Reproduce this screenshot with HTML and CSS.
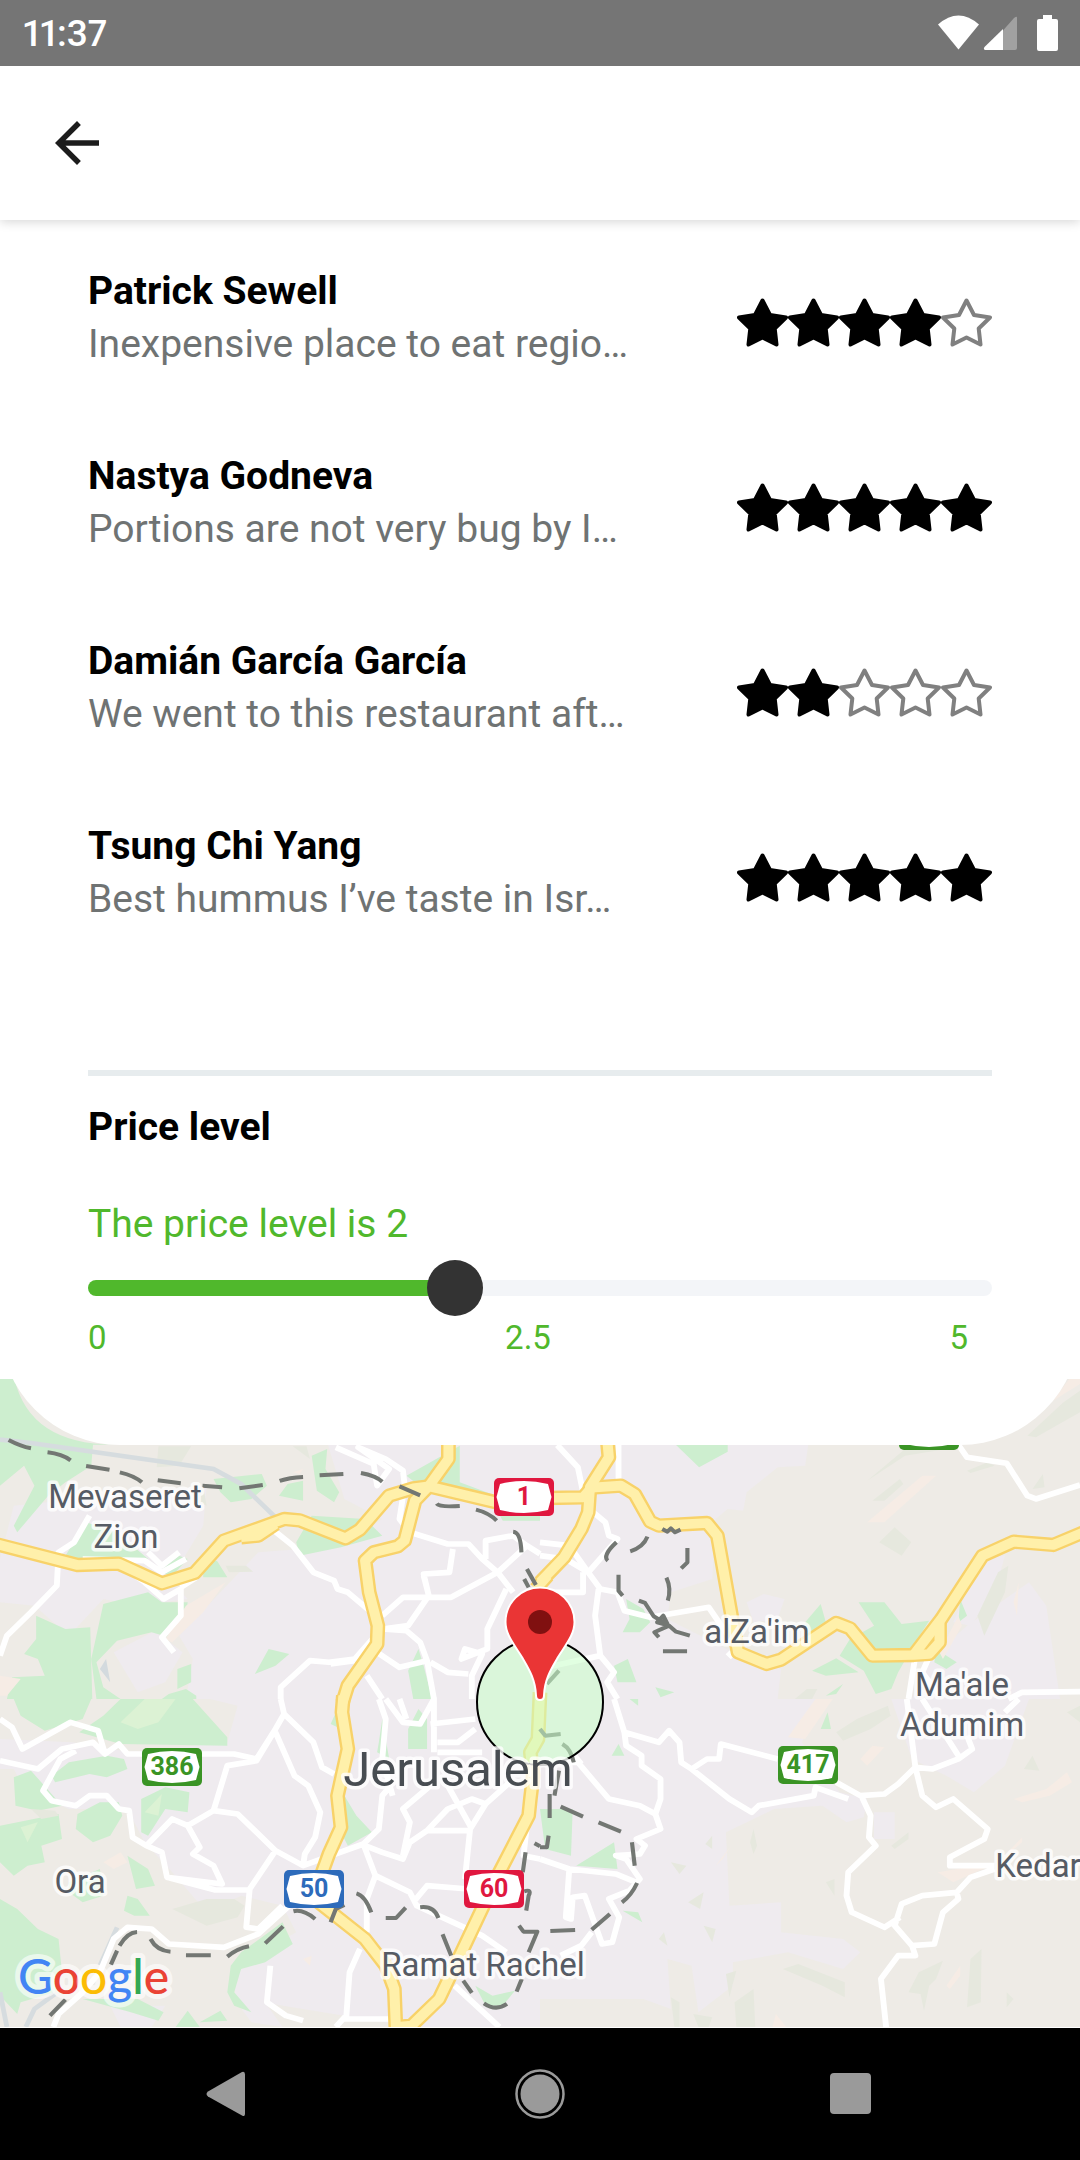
FILE: index.html
```html
<!DOCTYPE html>
<html lang="en">
<head>
<meta charset="utf-8">
<meta name="viewport" content="width=device-width, initial-scale=1">
<title>Reviews</title>
<link rel="stylesheet" href="styles.css">
</head>
<body>
<svg class="defs" aria-hidden="true">
  <defs>
    <path id="star" d="M25.5 2.5 33 17 49 19.500 37.700 30.500 39.500 46.500 25.500 39.500 11.500 46.500 13.300 30.500 2 19.500 18 17Z"/>
    <g id="s0"><use href="#star" class="star-off"/></g>
    <g id="s1"><use href="#star" class="star-on"/></g>
  </defs>
</svg>
<div class="screen">
  <header class="status">
    <span class="clock">11:37</span>
    <svg class="status-icons" viewBox="0 0 122 36" aria-hidden="true">
      <path fill="#fff" d="M0 9.500Q20.500-8.500 41 9.500L20.500 34.500Z"/>
      <path fill="#a1a1a1" d="M79 2.500V33q0 2-2 2H65V15.500L76 3q3-2 3-.5Z"/>
      <path fill="#fff" d="M65 14V35H47q-2-1-.5-3Z"/>
      <path fill="#fff" d="M105 0h9v4h4q2 0 2 2v28q0 2-2 2h-17q-2 0-2-2V6q0-2 2-2h4Z"/>
    </svg>
  </header>
  <div class="appbar">
    <button class="icon-btn" aria-label="Back">
      <svg viewBox="0 0 24 24"><path fill="#1c1c1c" d="M20 11H7.830l5.590-5.590L12 4l-8 8 8 8 1.410-1.410L7.830 13H20z"/></svg>
    </button>
  </div>
  <main class="content">
    <section class="sheet">
      <ul class="reviews">
        <li class="review">
          <div class="review-text"><h2>Patrick Sewell</h2><p>Inexpensive place to eat regio…</p></div>
          <svg class="stars" viewBox="0 0 255 50" role="img" aria-label="4 of 5"><use href="#s1"/><use href="#s1" x="51"/><use href="#s1" x="102"/><use href="#s1" x="153"/><use href="#s0" x="204"/></svg>
        </li>
        <li class="review">
          <div class="review-text"><h2>Nastya Godneva</h2><p>Portions are not very bug by I…</p></div>
          <svg class="stars" viewBox="0 0 255 50" role="img" aria-label="5 of 5"><use href="#s1"/><use href="#s1" x="51"/><use href="#s1" x="102"/><use href="#s1" x="153"/><use href="#s1" x="204"/></svg>
        </li>
        <li class="review">
          <div class="review-text"><h2>Damián García García</h2><p>We went to this restaurant aft…</p></div>
          <svg class="stars" viewBox="0 0 255 50" role="img" aria-label="2 of 5"><use href="#s1"/><use href="#s1" x="51"/><use href="#s0" x="102"/><use href="#s0" x="153"/><use href="#s0" x="204"/></svg>
        </li>
        <li class="review">
          <div class="review-text"><h2>Tsung Chi Yang</h2><p>Best hummus I’ve taste in Isr…</p></div>
          <svg class="stars" viewBox="0 0 255 50" role="img" aria-label="5 of 5"><use href="#s1"/><use href="#s1" x="51"/><use href="#s1" x="102"/><use href="#s1" x="153"/><use href="#s1" x="204"/></svg>
        </li>
      </ul>
      <div class="price">
        <h2>Price level</h2>
        <label for="price">The price level is 2</label>
        <input id="price" type="range" min="0" max="5" step="1" value="2">
        <div class="scale"><span>0</span><span>2.5</span><span>5</span></div>
      </div>
    </section>
    <section class="map" aria-label="Map">
      <svg class="map-art" viewBox="0 0 1080 648" preserveAspectRatio="xMidYMid slice">
        <defs>
          <g id="highways">
            <g transform="translate(0 -20) scale(.3444 .3333)">
              <path d="M-20 553 225 618 345 614 470 673 565 642 650 545 825 480 870 484 1003 538 1045 512 1130 410 1200 388 1245 382 1440 430"/>
              <path d="M1302 240V300L1245 382 1205 425 1175 545 1155 562 1085 580 1060 605 1072 700 1097 800 1095 855 1010 980 995 1030"/>
              <path d="M700 535 750 530 800 495"/>
              <path d="M1556 690 1590 650"/>
            </g>
            <g transform="translate(540 -20) scale(.3444 .3333)">
              <path d="M20 417 125 415 150 386 235 380 275 405 320 488 345 500 485 492 515 530 575 880 658 915 700 902 860 792 900 808 965 890 1085 888 1130 885 1160 850V790"/>
              <path d="M1085 888 1165 780 1285 590 1375 548 1490 558 1590 515"/>
              <path d="M195 240 200 295 145 385 140 460 120 510 70 595 0 670"/>
            </g>
            <g transform="translate(0 320) scale(.3444 .3333)">
              <path d="M997-10 993 40 1010 150 980 290 990 385 955 465 925 550"/>
              <path d="M925 610 1060 720 1120 800 1145 870 1150 1000"/>
              <path d="M1568-20 1562 120 1540 160 1548 230 1540 300 1535 350 1450 520 1340 760 1275 900 1195 980 1140 985"/>
            </g>
          </g>
        </defs>
        <rect width="1080" height="648" fill="#eeebe6"/>

        <g transform="translate(0 -20) scale(.3444 .3333)">
          <path class="urban" d="M950 250H1568V1020H540L560 900 520 830 640 700 750 580 1000 560 1110 480 1000 420ZM40 440 600 380 590 500 520 620 480 650 545 720 400 740 300 720 200 830 100 740 0 730V600ZM330 880 450 815 530 880 480 970 400 1000Z"/>
          <path class="green" d="M0 50H40Q80 255 330 257H270L265 320 220 350 190 370 140 410 50 520 40 500 100 380 70 320 0 380ZM620 360 760 345 775 380 730 420 670 430 640 400ZM810 410 835 375 880 365 880 425ZM905 290 950 270 945 330 985 400 970 430 920 395ZM1180 350 1335 260V370L1440 410V450L1230 390ZM860 550 905 470 1060 480 1110 530 990 565 870 590ZM300 735 430 700 470 730 545 730 535 790 520 780 490 835 440 820 340 845 280 910 300 985 350 1020H280L265 900ZM105 770 190 810 262 805 268 1020H20L35 955 130 950 110 900 70 885 105 840ZM740 945 780 870 840 885 800 920ZM515 930 555 915V970L515 990ZM1185 935 1215 870 1230 920 1255 1020H1200ZM590 610 630 605 660 655H590ZM190 590 250 490 340 520 430 600 200 600ZM490 1005 540 990 570 1010V1020H470ZM460 640 520 590 545 600 500 650ZM1435 440H1568V485H1460Z"/>
          <path class="hill" d="M460 262H555L520 320 455 325ZM655 620H715L735 638 665 640ZM520 410 590 380 600 440ZM850 262 890 262 900 300Z"/>
          <path class="peach" d="M540 740 655 670 590 760 500 850 480 840ZM0 950 60 960 20 1010H0ZM850 340 880 330 870 345Z"/>
          <path class="water-line" d="M0 242 90 252 620 330 700 375 800 475"/>
          <path fill="#d3dade" d="M290 930 308 900 320 970Z"/>
        </g>
        <g transform="translate(540 -20) scale(.3444 .3333)">
          <path class="urban" d="M0 250H780L770 320 690 325 600 400 590 455 545 450 510 480 500 660 380 700 370 780 560 880 640 900 700 930 690 1020H0ZM1420 670 1470 740 1510 1020H1080L1130 900 1240 800ZM1280 600 1350 590 1320 700 1250 800 1200 790ZM600 730 650 705 710 720 690 780 620 790Z"/>
          <path class="green" d="M395 258H545V278L462 325ZM925 730H1000L1050 795 1130 785 1090 850 1040 940 1020 990 975 1005 940 935 870 890 900 840 970 800ZM770 790 815 735 830 790 780 830ZM790 935 860 898 925 940 830 950ZM250 720 300 750 320 790 290 820 240 820 260 780ZM215 920 255 900 280 970 225 970ZM830 1010 880 975 860 1005ZM1150 870 1210 910 1180 930 1145 910ZM1220 720 1240 770 1215 790ZM335 985 390 1000 350 1015Z"/>
          <path class="hill" d="M1415 230 1520 130 1568 95V160L1440 235ZM950 365 1060 270 1100 258 1180 270 1060 290ZM965 425 1045 360 1055 375 1000 425ZM985 550 1030 505 1078 550 1050 590ZM1240 335 1300 310 1320 320 1250 342ZM1430 390 1460 345 1465 385ZM1270 770 1330 640 1360 620 1350 700 1290 830ZM740 1020 775 990 805 990 790 1020Z"/>
          <path class="peach" d="M1490 125 1540 55H1568V75ZM950 490 1110 350 1150 350 1000 490ZM1160 880 1215 770 1225 800 1170 900ZM1375 730 1390 670 1385 770Z"/>
        </g>
        <g transform="translate(0 320) scale(.3444 .3333)">
          <path class="urban" d="M0 120 210 130 380 160 660 130 690 20 610 0H1568V984H1200L700 900 690 800 860 700 820 620 700 590 600 640 500 520 420 430 370 330 200 330 70 270 40 210H0ZM690 810 780 800 750 880 820 984 730 970 680 900ZM320 920 480 920 440 984H350Z"/>
          <path class="green" d="M40 0 265 0 240 60 130 95 60 50ZM300 50 350 0H560L660 115V140L350 135 230 100ZM150 230 200 190 310 170 360 180 370 210 310 235 260 225 160 250ZM40 235 90 215 180 320 110 335 45 320ZM225 345 290 310 345 310 355 350 320 410 270 430 220 390ZM0 380 170 345 180 420 120 440 130 490 80 500 40 530 0 490ZM410 300 480 265 550 280 545 340 480 330 430 410 410 400ZM0 600 50 630 110 690 170 720 180 820 160 880 60 910 50 945 0 890ZM200 550 290 510 300 590 240 610 200 580ZM370 470 430 510 450 560 395 570ZM370 590 400 600 435 650 390 650 360 635ZM670 800 700 760 820 670 850 735 770 790 700 810 680 880 730 940 680 920 660 880ZM1000 290 1035 350 1080 400 1010 440 990 400ZM240 900 400 900 475 940 460 965 380 940ZM510 984 545 935 580 984ZM580 970 640 935 660 965ZM1380 860 1430 890 1495 875 1460 920 1410 920ZM960 75 980 30V85ZM1100 130 1110 60 1130 180 1095 160ZM1185 90 1215 30 1240 60V150H1185Z"/>
          <path class="pale" d="M350 70 420 0H510L460 70 400 90ZM420 340 470 285 460 350ZM60 385 110 370 80 430Z"/>
          <path class="hill" d="M500 630 600 600 680 600 710 620 690 655 600 680ZM90 330 160 335 170 350 120 360Z"/>
          <path class="peach" d="M300 490 350 460 370 490 330 510ZM170 870 250 840 230 890ZM880 780 905 770 900 800Z"/>
          <path class="water-line" d="M340 685 290 800M75 984 100 930 160 885M0 880 20 984"/>
        </g>
        <g transform="translate(540 320) scale(.3444 .3333)">
          <path class="urban" d="M0 0H830L760 130 870 280 950 300 940 355 890 370 820 320 680 330 540 400 550 620 700 610 700 700 880 720 930 760 880 810 720 760 560 790 560 860 460 940 440 800 370 780 380 930 300 900H0ZM1020 0H1420L1350 200 1260 280 1180 230 1080 180ZM970 340H1030V420H970Z"/>
          <path class="green" d="M0 330H95L90 470 15 450ZM105 500 215 430 225 510ZM240 635 285 640 297 670ZM208 170 228 135 245 170ZM815 90 835 40 845 90ZM260 0H285V20Z"/>
          <path class="hill" d="M860 100 920 60 1010 20 1018 50 960 90 880 125ZM1020 440 1070 400 1070 420 1030 450ZM480 435 500 410 500 450ZM610 430 620 390 630 440 620 465ZM380 490 425 500 405 525ZM430 610 475 580 465 630ZM830 550 855 540 855 590ZM475 680 510 690 500 730ZM345 720 360 700 370 740ZM705 810 750 795 885 850V895L820 860ZM1070 880 1100 820 1170 785 1150 840 1130 860 1115 935 1105 885ZM1250 780 1282 750 1280 910 1240 925ZM1355 880 1375 900 1355 925ZM540 825 570 815 550 895ZM565 910 620 870 625 984H570ZM380 895 405 910V984H390ZM445 945 500 955 490 984H460ZM1405 210 1430 170 1450 215ZM1530 40 1568 20V70Z"/>
          <path class="peach" d="M720 115 800 0H850L770 120ZM930 180 965 140 1000 145 950 200ZM1375 300 1470 270 1530 220 1545 250 1480 290 1400 310ZM510 500 555 440 530 480ZM1155 520 1330 490 1400 415 1400 430 1330 490 1200 550ZM1180 860 1220 800 1220 830 1190 870ZM675 984 685 945 715 984Z"/>
        </g>

        <g class="street">
          <g transform="translate(0 -20) scale(.3444 .3333)">
            <path d="M975 265 1085 315 1095 380 1130 330 1040 265 1120 300 1170 335 1175 380 1160 480 1190 520 1300 555 1360 555 1400 600 1445 640 1490 700M1315 570 1305 640 1230 645 1245 710 1185 800 1110 810M1410 600 1410 545 1490 530 1530 560 1568 585M1530 560 1445 640 1310 715H1170L1110 770M1245 710 1230 650M790 510 850 560 910 640 970 665 980 690 1010 700 1090 770M1090 830 1030 900 955 910 900 905 815 985V1020M1110 810 1180 815 1220 850 1240 905 1160 925 1095 880M1065 950 1110 1020M1030 905 960 915M1240 905 1260 1020M1250 910 1300 940 1360 945M1470 690 1415 810V870L1340 900 1350 870 1400 885 1370 950V1020"/>
            <path d="M240 600 420 605 470 640 540 600M260 470 215 550 170 580 165 680 90 760 20 830 0 890M430 580 470 620 520 580M350 620 420 670 475 720 525 690V770L470 835 505 880M570 655 525 685"/>
          </g>
          <g transform="translate(540 -20) scale(.3444 .3333)">
            <path d="M50 258 110 325 125 400M228 250V370M155 460 190 490 200 530 225 540 140 640 85 560 0 550M0 590 75 600 140 640 175 690 225 700 245 755 320 775 490 745 560 850M125 640V700H0M170 690 160 770 175 890 215 940 195 970 225 1020M20 925 175 890M1215 258 1240 295 1355 313 1415 410 1440 420 1568 378M1090 890 1070 1020M1140 870 1110 940 1160 1010M1360 1020 1400 1000 1568 998M545 880 560 895"/>
          </g>
          <g transform="translate(0 320) scale(.3444 .3333)">
            <path d="M0 60 35 85 65 150 205 70 285 95 305 165 345 135 370 165 680 165 745 180 800 90 825 45 815 0M0 185 110 210 180 150 270 130 305 165M220 155 175 180 125 275 150 305 220 320 260 290H310L345 330 375 335 385 415 425 440 500 360 545 380 620 335 660 200 745 185 800 90M545 380 580 445 560 465 620 500 645 555 485 535 470 460 425 440M620 335 690 345 800 455 880 500 1055 435 1100 390 1110 290 1135 260M825 45 910 130 935 205 970 225M800 100 855 230 895 260 930 340 915 415 885 465 880 500M800 455 725 570 715 685 750 690 820 620M725 573H625L485 535M155 984 170 945 240 880 290 820 330 720 370 685 440 690 490 735 650 745 750 705 840 620M785 800 775 910 830 950 880 965M1055 435 1090 530 1065 600V700M1090 530 1190 580 1210 620 1400 710 1470 760M1060 440 1110 460 1170 480 1190 430 1240 395 1370 395M1200 610 1240 560 1360 570M1350 540 1365 390 1410 315 1480 250M1300 260 1365 380M1240 395 1300 330 1370 300 1410 315M1170 470 1190 370 1170 330 1250 260M1045 750 1015 820 1005 960H1130M1005 950 975 984M1320 860 1450 984M1100 0 1120 60 1110 180 1140 290M1120 0 1170 70 1220 75 1260 0V160M1160 0 1180 60M1250 75 1380 60M1270 130 1330 130 1380 90M1270 160H1400M1530 380 1520 470 1568 480"/>
          </g>
          <g transform="translate(540 320) scale(.3444 .3333)">
            <path d="M215 0 245 100 345 130 375 95 405 130 410 190 440 210 485 180H520L525 135 690 180M245 100 250 140 295 170 295 200 350 240V300L335 345 350 390 280 420 305 440 290 465 220 470 250 480 290 540 260 575 200 600 230 655 210 730 180 735 130 590 95 595 90 660 75 655 85 510M440 210 550 300 615 340 635 320 795 290 800 265 895 300M0 480 85 510 220 525 280 550M40 190H110L200 300 290 320 335 345M60 770 120 740 150 700M860 250 930 290 1000 285 1040 255 1090 205 1140 210 1215 180 1255 150 1240 110M1065 0 1090 205 1110 290 1150 325 1200 300 1300 390 1290 420 1190 475V500H1320M1110 0 1215 170M935 295 960 350 955 415 975 440 895 520 890 590 905 640 1000 685 1045 655M1320 510 1250 535 1210 580 1110 590 1050 615 1030 680 1080 740 1145 735 1170 640 1215 600 1210 580M1080 740 1090 770H1040L990 840 1005 984M1350 40 1390 0M100 170 120 195"/>
          </g>
        </g>
        <use href="#highways" class="road-edge"/>
        <use href="#highways" class="road-fill"/>

        <g class="border-line">
          <g transform="translate(0 -20) scale(.3444 .3333)">
            <path d="M25 243Q60 262 90 268M138 280Q180 285 205 304M250 321 318 332M348 340Q390 350 412 370M458 364 525 373M588 380 645 385M695 388 763 378M812 366Q840 356 880 354M928 349 997 345M1048 342Q1090 350 1110 368M1160 382 1220 409M1268 434Q1275 445 1335 441M1382 452Q1420 462 1442 485M1490 518Q1512 520 1514 580M1530 630 1556 678M1522 660 1535 685"/>
          </g>
          <g transform="translate(540 -20) scale(.3444 .3333)">
            <path d="M312 533Q300 565 262 577M222 550Q180 590 197 605M355 510 370 518 380 508 392 520 408 512M428 567V610L410 628M228 647V695L240 710M367 656Q382 690 371 725M287 725 305 732 330 772 375 800 395 818 435 830M345 835 332 820 375 800 340 790 358 770 370 795M357 877H427M20 975 55 935"/>
          </g>
          <g transform="translate(0 320) scale(.3444 .3333)">
            <path d="M145 950 190 902M322 797 340 755M347 740Q370 700 398 699M437 720Q455 755 495 758M540 769H612M660 773Q690 748 723 742M770 733 822 682M852 637Q880 630 915 660M960 670 975 630 1000 618M1035 583Q1060 590 1078 640M1120 657H1150L1178 626M1220 625Q1260 620 1273 657M1285 706 1310 770M1345 845 1370 882M1405 913Q1440 938 1472 915M1500 878 1515 840M1535 760 1560 698H1520L1507 680M1522 577Q1545 570 1535 590L1528 635M1526 460 1518 520M1552 433 1568 442"/>
          </g>
          <g transform="translate(540 320) scale(.3444 .3333)">
            <path d="M55 215 42 290M28 285V357M60 323 125 353M170 370 235 398M267 430 275 500M282 552Q265 590 238 610M203 645 150 692M102 693 30 696M25 410 20 445H0M0 90 15 110 60 105M65 135Q90 150 98 190"/>
          </g>
        </g>

        <circle cx="540" cy="323" r="63" fill="#c8ffc8" fill-opacity=".55" stroke="#000" stroke-width="2"/>
        <path fill="#ea3535" stroke="#fff" stroke-width="2" d="M540 208.500a34.500 34.500 0 0 0-34.500 34.500c0 13 9 23 17 36 7 12 13 22 13.500 37.500q0 4.500 4 4.500t4-4.500c.5-15.500 6.500-25.500 13.500-37.500 8-13 17-23 17-36a34.500 34.500 0 0 0-34.500-34.500Z"/>
        <circle cx="540" cy="243" r="12" fill="#801010"/>

        <defs>
          <g id="shield"><rect width="60" height="38" rx="5" fill="currentColor"/><path fill="#fff" d="M6 6Q30 0 54 6L57.500 19 54 32Q30 38 6 32L2.500 19Z"/></g>
        </defs>
        <g class="shields">
          <g class="c-red"><use href="#shield" x="494" y="99"/><text x="524" y="126">1</text></g>
          <g class="c-green"><use href="#shield" x="142" y="369"/><text x="172" y="396">386</text></g>
          <g class="c-green"><use href="#shield" x="778" y="367"/><text x="808" y="394">417</text></g>
          <g class="c-blue"><use href="#shield" x="284" y="491"/><text x="314" y="518">50</text></g>
          <g class="c-red"><use href="#shield" x="464" y="491"/><text x="494" y="518">60</text></g>
          <g class="c-green"><use href="#shield" x="899" y="33"/></g>
        </g>
        <g class="places">
          <text x="125" y="129">Mevaseret</text>
          <text x="126" y="169">Zion</text>
          <text x="757" y="264">alZa'im</text>
          <text x="962" y="317">Ma'ale</text>
          <text x="962" y="357">Adumim</text>
          <text x="1038" y="498">Kedar</text>
          <text x="80" y="514">Ora</text>
          <text x="483" y="597">Ramat Rachel</text>
          <text class="city" x="458" y="407">Jerusalem</text>
        </g>
        <text class="google" x="18" y="615"><tspan fill="#4285f4">G</tspan><tspan fill="#ea4335">o</tspan><tspan fill="#fbbc05">o</tspan><tspan fill="#4285f4">g</tspan><tspan fill="#34a853">l</tspan><tspan fill="#ea4335">e</tspan></text>
      </svg>
    </section>
  </main>
  <nav class="navbar" aria-label="System">
    <button aria-label="Back"><svg viewBox="0 0 66 66"><path fill="#9a9a9a" d="M51 13.500V53q0 3-3 1.500L14 35.500q-3-2.500 0-5L48 11q3-1 3 2.500Z"/></svg></button>
    <button aria-label="Home"><svg viewBox="0 0 66 66"><circle cx="33" cy="33" r="19.500" fill="#9a9a9a"/><circle cx="33" cy="33" r="23.500" fill="none" stroke="#9a9a9a" stroke-width="2.500"/></svg></button>
    <button aria-label="Overview"><svg viewBox="0 0 66 66"><rect x="10" y="12" width="41" height="41" rx="4" fill="#9a9a9a"/></svg></button>
  </nav>
</div>
</body>
</html>
```
FILE: styles.css
```css
* { box-sizing: border-box; }

body {
  margin: 0;
  background: #fff;
  color: #000;
  font-family: Roboto, "Noto Sans", sans-serif;
}

h2, p, ul { margin: 0; padding: 0; }

button {
  padding: 0;
  border: 0;
  background: none;
}

svg { display: block; }

.defs { display: none; }

.screen {
  display: flex;
  flex-direction: column;
  min-height: 100vh;
}

.status {
  position: relative;
  z-index: 3;
  display: flex;
  align-items: center;
  justify-content: space-between;
  height: 66px;
  padding: 0 20px 0 23px;
  background: #757575;
  color: #fff;
}

.clock {
  font-size: 37px;
  font-variant-numeric: proportional-nums;
  font-weight: 500;
}

.status-icons { width: 122px; height: 36px; }

.appbar {
  position: relative;
  display: flex;
  align-items: center;
  height: 154px;
  padding: 0 44px;
  background: #fff;
  box-shadow: 0 2px 10px rgba(0, 0, 0, .16);
  z-index: 2;
}

.icon-btn,
.icon-btn svg { width: 66px; height: 66px; }

.content {
  display: flex;
  flex: 1;
  flex-direction: column;
}

.sheet {
  position: relative;
  z-index: 1;
  padding: 45px 88px 85px;
  margin-bottom: -66px;
  border-radius: 0 0 120px 120px;
  background: #fff;
}

.reviews {
  display: flex;
  flex-direction: column;
  gap: 79px;
  padding-bottom: 144px;
  border-bottom: 6px solid #e7ecee;
  list-style: none;
}

.review {
  display: flex;
  align-items: center;
  justify-content: space-between;
}

.review h2,
.price h2,
.review p,
.price label {
  font-size: 39px;
  line-height: 53px;
  white-space: nowrap;
}

.review h2,
.price h2 { font-weight: 700; }

.review p { color: #6f7373; }

.stars {
  width: 255px;
  height: 50px;
  margin-top: 10px;
}

.star-on,
.star-off {
  stroke-width: 4px;
  stroke-linejoin: round;
}

.star-on { fill: #000; stroke: #000; }
.star-off { fill: #fff; stroke: #808080; }

.price {
  display: flex;
  flex-direction: column;
  padding-top: 25px;
  color: #50b82c;
}

.price h2 { color: #000; }

.price label { margin-top: 44px; }

.price input {
  width: 100%;
  height: 56px;
  margin: 9px 0 0;
  appearance: none;
  background: none;
}

.price input::-webkit-slider-runnable-track {
  height: 16px;
  border-radius: 8px;
  background: linear-gradient(90deg, #50b82c 41%, #f3f5f8 41%);
}

.price input::-webkit-slider-thumb {
  width: 56px;
  height: 56px;
  margin-top: -20px;
  border-radius: 50%;
  appearance: none;
  background: #333;
}

.scale {
  display: flex;
  justify-content: space-between;
  padding-right: 24px;
  font-size: 33px;
  line-height: 44px;
}

.map {
  display: flex;
  flex: 1;
  min-height: 480px;
}

.map-art { width: 100%; height: 100%; }

.urban { fill: #efebef; }
.green { fill: #cdeecf; }
.pale { fill: #dcf2d4; }
.hill { fill: #e6e8de; }
.peach { fill: #f6ece5; }
.water-line { fill: none; stroke: #d6dcdf; stroke-width: 14px; }

.street,
.border-line,
.road-edge,
.road-fill {
  fill: none;
  stroke-linejoin: round;
}

.street { stroke: #fff; stroke-width: 17px; }
.road-edge { stroke: #f8d269; stroke-width: 43px; }
.road-fill { stroke: #fff0aa; stroke-width: 29px; }
.border-line { stroke: #737773; stroke-width: 12px; }

.c-red { color: #e0173f; }
.c-green { color: #3a9425; }
.c-blue { color: #2d6bbb; }

.shields text {
  fill: currentColor;
  font-size: 25px;
  font-weight: 700;
  text-anchor: middle;
}

.places text {
  fill: #565b64;
  stroke: rgba(255, 255, 255, .8);
  stroke-width: 7px;
  stroke-linejoin: round;
  paint-order: stroke;
  font-size: 33px;
  text-anchor: middle;
}

.places .city { fill: #484d52; font-size: 49px; }

.google {
  stroke: rgba(255, 255, 255, .6);
  stroke-width: 10px;
  stroke-linejoin: round;
  paint-order: stroke;
  font-family: Lato, sans-serif;
  font-size: 48px;
  font-weight: 500;
}

.navbar {
  display: grid;
  grid-template-columns: repeat(3, 1fr);
  align-items: center;
  justify-items: center;
  height: 132px;
  padding: 0 70px;
  background: #000;
}

.navbar svg { width: 66px; height: 66px; }
```
